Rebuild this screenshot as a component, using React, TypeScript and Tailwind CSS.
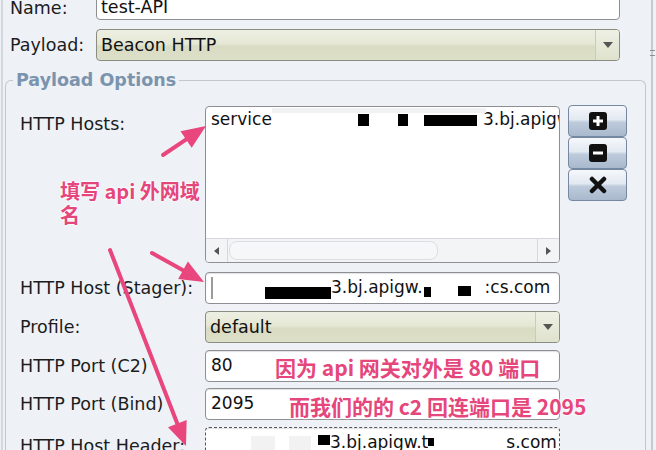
import React from "react";

const font = "font-['Lucida_Grande','DejaVu_Sans',sans-serif]";
const cjk = "font-['Noto_Sans_CJK_SC','Noto_Sans',sans-serif]";

function Label({ children, className = "" }: { children: React.ReactNode; className?: string }) {
  return <div className={`w-[185px] shrink-0 text-[17.5px] text-[#1c1c1c] ${className}`}>{children}</div>;
}

function TextField({ children, dotted = false }: { children?: React.ReactNode; dotted?: boolean }) {
  return (
    <div
      className={`flex h-[32px] w-[355px] items-center overflow-hidden whitespace-nowrap rounded-[4px] bg-white pl-[5px] text-[17px] text-[#111] shadow-[inset_0_1px_1px_rgba(0,0,0,0.12)] ${
        dotted ? "border border-dashed border-[#555]" : "border border-[#8d8f94]"
      }`}
    >
      {children}
    </div>
  );
}

function Combo({ value, width }: { value: string; width: string }) {
  return (
    <div
      className={`flex h-[32px] ${width} items-stretch overflow-hidden rounded-[4px] border border-[#8a8c80] bg-[linear-gradient(180deg,#edefe2_0%,#e6e8d5_45%,#d9dcc3_55%,#dde0c8_100%)] text-[17.5px] text-[#111]`}
    >
      <div className="flex flex-1 items-center pl-[4px]">{value}</div>
      <div className="flex w-[24px] items-center justify-center border-l border-[#c9ccb6] bg-[linear-gradient(180deg,#eef0e4_0%,#dfe2cc_100%)]">
        <svg width="10" height="6" viewBox="0 0 10 6">
          <path d="M0 0 L10 0 L5 6 Z" fill="#555" />
        </svg>
      </div>
    </div>
  );
}

function Block({ w, h, className = "" }: { w: string; h: string; className?: string }) {
  return <span className={`inline-block shrink-0 bg-black ${w} ${h} ${className}`} />;
}

function ListButton({ children }: { children: React.ReactNode }) {
  return (
    <div className="flex h-[32px] items-center justify-center rounded-[4px] border border-[#7688a0] bg-[linear-gradient(180deg,#f5f7fb_0%,#e3e9f1_45%,#bccadb_55%,#a9b9cd_100%)]">
      {children}
    </div>
  );
}

function Arrow({ x1, y1, x2, y2 }: { x1: number; y1: number; x2: number; y2: number }) {
  const dx = x2 - x1;
  const dy = y2 - y1;
  const len = Math.hypot(dx, dy);
  const ux = dx / len;
  const uy = dy / len;
  const head = 24;
  const half = 10;
  const bx = x2 - ux * head;
  const by = y2 - uy * head;
  const pts = `${x2},${y2} ${bx - uy * half},${by + ux * half} ${bx + uy * half},${by - ux * half}`;
  return (
    <g>
      <line x1={x1} y1={y1} x2={bx + ux * 2} y2={by + uy * 2} stroke="#e8467c" strokeWidth="4" strokeLinecap="round" />
      <polygon points={pts} fill="#e8467c" />
    </g>
  );
}

export default function App() {
  const halo = "[text-shadow:0_0_2px_#fff,0_0_2px_#fff,0_0_3px_#fff]";
  return (
    <div className={`relative h-[450px] w-[656px] overflow-hidden bg-[#eef1f6] ${font}`}>
      <div className="absolute left-[1px] top-0 h-full w-[2px] bg-[#d3d7de]" />
      <div className="absolute right-[3px] top-0 h-full w-[2px] bg-[#c6cad1]" />
      <div className="absolute right-[1px] top-[50px] h-[1px] w-[5px] bg-[#8a8e96]" />
      <div className="absolute right-[1px] top-[55px] h-[1px] w-[5px] bg-[#8a8e96]" />

      <div className="flex flex-col pl-[10px] pr-[36px]">
        <div className="mt-[-8px] flex h-[28px] items-end">
          <div className="w-[86px] text-[17.5px] leading-[24px] text-[#1c1c1c]">Name:</div>
          <div className="flex h-full flex-1 items-end rounded-[4px] border border-[#8d8f94] bg-white pl-[4px] text-[17.5px] leading-[24px] text-[#111]">
            test-API
          </div>
        </div>
        <div className="mt-[9px] flex h-[32px] items-center">
          <div className="w-[86px] text-[17.5px] text-[#1c1c1c]">Payload:</div>
          <Combo value="Beacon HTTP" width="flex-1" />
        </div>
      </div>

      <div className="relative ml-[5px] mr-[10px] mt-[19px] rounded-t-[6px] border-l border-r border-t border-[#c3c7cf] pb-[20px] pl-[14px] pt-[25px]">
        <div className="absolute left-[7px] top-[-12px] bg-[#eef1f6] px-[3px] text-[17.5px] font-bold leading-[22px] text-[#7b94ae]">
          Payload Options
        </div>

        <div className="flex">
          <Label className="pt-[5px]">HTTP Hosts:</Label>
          <div className="flex h-[157px] w-[355px] flex-col overflow-hidden rounded-[4px] border border-[#8d8f94] bg-white">
            <div className="relative flex h-[26px] items-center whitespace-nowrap pl-[5px] text-[17px] text-[#111]">
              <div className="absolute left-[66px] top-[1px] h-[5px] w-[214px] bg-[#f1f2f3]" />
              <span>service</span>
              <span className="w-[86px] shrink-0" />
              <Block w="w-[11px]" h="h-[12px]" />
              <span className="w-[29px] shrink-0" />
              <Block w="w-[10px]" h="h-[12px]" />
              <span className="w-[16px] shrink-0" />
              <Block w="w-[53px]" h="h-[11px]" />
              <span className="ml-[6px]">3.bj.apigw.com</span>
            </div>
            <div className="flex-1" />
            <div className="flex h-[24px] items-stretch border-t border-[#d6d8dc] bg-[#f3f4f6]">
              <div className="flex w-[22px] items-center justify-center border-r border-[#d6d8dc]">
                <svg width="5" height="8" viewBox="0 0 5 8">
                  <path d="M5 0 L0 4 L5 8 Z" fill="#555" />
                </svg>
              </div>
              <div className="my-[2px] ml-[1px] w-[209px] rounded-[8px] border border-[#dcdee2] bg-[#f6f7f8]" />
              <div className="flex-1" />
              <div className="flex w-[22px] items-center justify-center border-l border-[#d6d8dc]">
                <svg width="5" height="8" viewBox="0 0 5 8">
                  <path d="M0 0 L5 4 L0 8 Z" fill="#555" />
                </svg>
              </div>
            </div>
          </div>
          <div className="ml-[8px] mt-[-1px] flex w-[59px] flex-col gap-0">
            <ListButton>
              <svg width="18" height="18" viewBox="0 0 18 18">
                <rect x="0" y="0" width="18" height="18" rx="3" fill="#111" />
                <path d="M9 4 V14 M4 9 H14" stroke="#fff" strokeWidth="3" />
              </svg>
            </ListButton>
            <ListButton>
              <svg width="18" height="18" viewBox="0 0 18 18">
                <rect x="0" y="0" width="18" height="18" rx="3" fill="#111" />
                <path d="M4 9 H14" stroke="#fff" strokeWidth="3" />
              </svg>
            </ListButton>
            <ListButton>
              <svg width="18" height="18" viewBox="0 0 18 18">
                <path d="M3 3 L15 15 M15 3 L3 15" stroke="#111" strokeWidth="4.5" strokeLinecap="round" />
              </svg>
            </ListButton>
          </div>
        </div>

        <div className="mt-[9px] flex items-center">
          <Label>HTTP Host (Stager):</Label>
          <TextField>
            <span className="mr-[52px] inline-block h-[22px] w-[2px] shrink-0 bg-[#9a9a9a]" />
            <Block w="w-[66px]" h="h-[12px]" className="mt-[10px]" />
            <span>3.bj.apigw.</span>
            <Block w="w-[7px]" h="h-[10px]" className="ml-[1px] mt-[8px]" />
            <span className="w-[27px] shrink-0" />
            <Block w="w-[13px]" h="h-[10px]" className="mt-[6px]" />
            <span className="ml-[14px]">:cs.com</span>
          </TextField>
        </div>

        <div className="mt-[7px] flex items-center">
          <Label>Profile:</Label>
          <Combo value="default" width="w-[355px]" />
        </div>

        <div className="mt-[7px] flex items-center">
          <Label>HTTP Port (C2)</Label>
          <TextField>80</TextField>
        </div>

        <div className="mt-[6px] flex items-center">
          <Label>HTTP Port (Bind)</Label>
          <TextField>2095</TextField>
        </div>

        <div className="mt-[7px] flex items-start">
          <Label className="pt-[6px]">HTTP Host Header:</Label>
          <TextField dotted>
            <span className="ml-[40px] inline-block h-[14px] w-[24px] shrink-0 bg-[#f2f2f2]" />
            <span className="ml-[14px] inline-block h-[14px] w-[22px] shrink-0 bg-[#f2f2f2]" />
            <Block w="w-[12px]" h="h-[10px]" className="ml-[7px] mb-[6px]" />
            <span>3.bj.apigw.t</span>
            <Block w="w-[6px]" h="h-[8px]" className="mb-[2px]" />
            <span className="ml-[72px]">s.com</span>
          </TextField>
        </div>
      </div>

      <svg className="pointer-events-none absolute left-0 top-0" width="656" height="450" viewBox="0 0 656 450">
        <Arrow x1={163} y1={155} x2={206} y2={126} />
        <Arrow x1={152} y1={253} x2={204} y2={282} />
        <Arrow x1={110} y1={250} x2={186} y2={446} />
      </svg>

      <div className={`absolute left-[60px] top-[179px] text-[20px] font-bold leading-[24px] text-[#e5467b] ${cjk} ${halo}`}>
        填写 api 外网域
        <br />名
      </div>
      <div className={`absolute left-[275px] top-[354px] whitespace-nowrap text-[21px] font-bold leading-[26px] text-[#e5467b] ${cjk} ${halo}`}>
        因为 api 网关对外是 80 端口
      </div>
      <div className={`absolute left-[289px] top-[393px] whitespace-nowrap text-[21px] font-bold leading-[26px] text-[#e5467b] ${cjk} ${halo}`}>
        而我们的的 c2 回连端口是 2095
      </div>
    </div>
  );
}
